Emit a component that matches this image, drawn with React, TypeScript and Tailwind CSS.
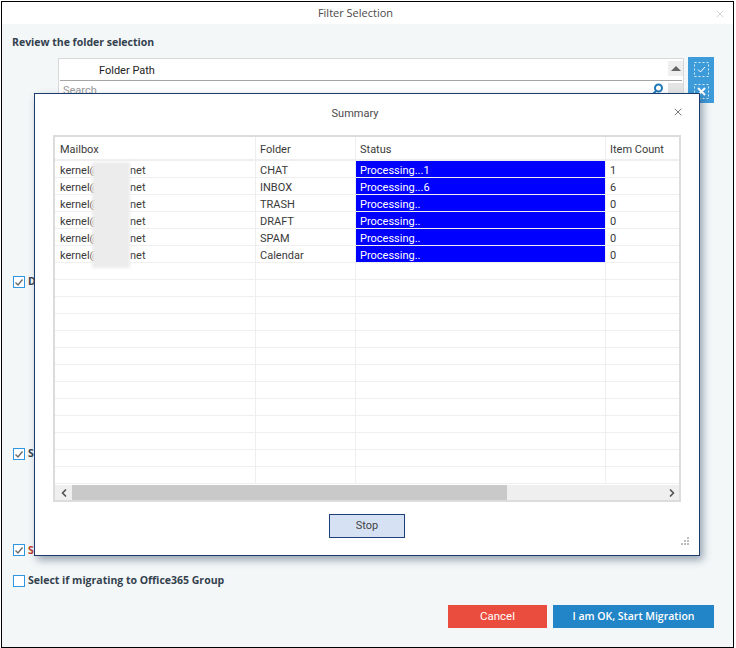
import { ChevronLeft, ChevronRight, X } from "lucide-react";

const rows = [
  { folder: "CHAT", status: "Processing...1", count: "1" },
  { folder: "INBOX", status: "Processing...6", count: "6" },
  { folder: "TRASH", status: "Processing..", count: "0" },
  { folder: "DRAFT", status: "Processing..", count: "0" },
  { folder: "SPAM", status: "Processing..", count: "0" },
  { folder: "Calendar", status: "Processing..", count: "0" },
];

const emptyRows = Array.from({ length: 13 });

function Check({ checked }: { checked: boolean }) {
  return (
    <span className="flex h-3 w-3 shrink-0 items-center justify-center border border-[#2f97e0] bg-white">
      {checked && (
        <svg width="10" height="10" viewBox="0 0 10 10" fill="none" stroke="#6b6b6b" strokeWidth="1.4">
          <path d="M1.5 5.5 L4 8 L8.5 2.5" />
        </svg>
      )}
    </span>
  );
}

function CheckRow({ label, className }: { label: string; className: string }) {
  return (
    <div className={`ml-[11px] flex items-center gap-[3px] text-[10.5px] font-bold text-[#33414e] ${className}`}>
      <Check checked />
      <span>{label}</span>
    </div>
  );
}

function Cell({ className = "", children }: { className?: string; children?: React.ReactNode }) {
  return <div className={`flex items-center border-r border-[#efefef] pt-[4px] ${className}`}>{children}</div>;
}

function Summary() {
  return (
    <div className="absolute left-[34px] top-[93px] flex h-[463px] w-[666px] flex-col border border-[#1d3c6e] bg-white font-['Roboto',sans-serif] shadow-[3px_4px_8px_rgba(40,60,90,0.45)]">
      <div className="relative flex h-[41px] shrink-0 items-center justify-center pb-[1px] pr-[24px] text-[#4a4a4a]">
        Summary
        <X size={12} strokeWidth={1.6} className="absolute right-[15px] top-[12px] text-[#555]" />
      </div>

      <div className="relative mx-[18px] h-[367px] overflow-hidden border-2 border-[#dcdcdc] text-[#3a3a3a]">
        <div className="flex h-[24px] border-b-2 border-[#efefef]">
          <Cell className="w-[201px] pl-[5px]">Mailbox</Cell>
          <Cell className="w-[100px] pl-[4px]">Folder</Cell>
          <Cell className="w-[250px] pl-[4px]">Status</Cell>
          <Cell className="flex-1 border-r-0 pl-[4px]">Item Count</Cell>
        </div>

        {rows.map((row) => (
          <div key={row.folder} className="flex h-[17px] border-b border-[#efefef]">
            <Cell className="w-[201px] pl-[5px]">
              <span className="w-[70px] overflow-hidden whitespace-nowrap">kernel@</span>
              <span>net</span>
            </Cell>
            <Cell className="w-[100px] pl-[4px]">{row.folder}</Cell>
            <Cell className="w-[250px] bg-[#0000ff] pl-[4px] text-white">{row.status}</Cell>
            <Cell className="flex-1 border-r-0 pl-[4px]">{row.count}</Cell>
          </div>
        ))}

        {emptyRows.map((_, i) => (
          <div key={i} className="flex h-[17px] border-b border-[#efefef]">
            <Cell className="w-[201px]" />
            <Cell className="w-[100px]" />
            <Cell className="w-[250px]" />
            <Cell className="flex-1 border-r-0" />
          </div>
        ))}

        {/* blurred address */}
        <div className="absolute left-[37px] top-[25px] h-[106px] w-[38px] bg-[#ececec] blur-[1.5px]" />

        <div className="absolute bottom-0 left-0 right-0 flex h-[15px] bg-[#efefef]">
          <div className="flex w-[17px] items-center justify-center">
            <ChevronLeft size={12} strokeWidth={3.5} className="text-[#555]" />
          </div>
          <div className="w-[435px] bg-[#c9c9c9]" />
          <div className="flex flex-1 items-center justify-end pr-[1px]">
            <ChevronRight size={12} strokeWidth={3.5} className="text-[#555]" />
          </div>
        </div>
      </div>

      <div className="relative flex flex-1 justify-center pt-[12px]">
        <button className="h-[24px] w-[76px] border border-[#1d4078] bg-[#d6e2f3] text-[#444]">Stop</button>
        <svg width="10" height="10" viewBox="0 0 10 10" fill="#bdbdbd" className="absolute bottom-[9px] right-[9px]">
          <rect x="7" y="1" width="2" height="2" />
          <rect x="4" y="4" width="2" height="2" />
          <rect x="7" y="4" width="2" height="2" />
          <rect x="1" y="7" width="2" height="2" />
          <rect x="4" y="7" width="2" height="2" />
          <rect x="7" y="7" width="2" height="2" />
        </svg>
      </div>
    </div>
  );
}

export default function App() {
  return (
    <div className="relative h-[648px] w-[736px] bg-white pl-px pt-px font-['Open_Sans',sans-serif] text-[11px]">
      <div className="flex h-[647px] w-[733px] flex-col border border-black bg-[#f3f7f8]">
        <div className="relative flex h-[22px] shrink-0 items-center justify-center bg-white pr-[24px] text-[#4a4a4a]">
          Filter Selection
          <X size={12} strokeWidth={1.5} className="absolute right-[7px] top-[6px] text-[#c4c4c4]" />
        </div>

        <h2 className="ml-[10px] mt-[10px] text-[10.5px] font-bold leading-[16px] text-[#33414e]">Review the folder selection</h2>

        <div className="ml-[56px] mt-[8px] flex h-[180px] gap-[4px]">
          <div className="relative w-[626px] border border-[#d8d8d8] bg-white">
            <div className="mx-[1px] flex h-[22px] items-center border-b border-[#a6a6a6] pl-[39px] pt-[3px] font-['Roboto',sans-serif] text-[11px] text-[#222]">
              Folder Path
            </div>
            <div className="pl-[4px] pt-[2px] font-['Roboto',sans-serif] text-[#9a9a9a]">Search</div>
            <svg width="13" height="13" viewBox="0 0 13 13" fill="none" stroke="#1f77b8" strokeWidth="2" className="absolute right-[19px] top-[24px]">
              <circle cx="7.5" cy="5" r="3.5" />
              <path d="M5 8 L1 12" />
            </svg>
            <div className="absolute right-0 top-[2px] flex w-[15px] flex-col gap-[7px]">
              <div className="flex h-[15px] items-center justify-center bg-[#efefef]">
                <span className="h-0 w-0 border-x-[5px] border-b-[5px] border-x-transparent border-b-[#666]" />
              </div>
              <div className="h-[40px] bg-[#e4e4e4]" />
            </div>
          </div>
          <div className="-mt-px flex h-[46px] w-[26px] flex-col items-center gap-[7px] bg-[#3d9bd9] pt-[5px]">
            <svg width="15" height="15" viewBox="0 0 15 15" fill="none" stroke="#ffffff">
              <rect x="0.5" y="0.5" width="14" height="14" strokeDasharray="2 2" opacity="0.8" />
              <path d="M4 7.5 L6.5 10 L11 5" />
            </svg>
            <svg width="15" height="15" viewBox="0 0 15 15" fill="none" stroke="#ffffff">
              <rect x="0.5" y="0.5" width="14" height="14" strokeDasharray="2 2" opacity="0.8" />
              <path d="M4 4 L11 11 M11 4 L4 11" strokeWidth="2" />
            </svg>
          </div>
        </div>

        <CheckRow label="D" className="mt-[36px]" />
        <CheckRow label="S" className="mt-[156px]" />
        <div className="ml-[11px] mt-[81px] flex items-center gap-[3px] text-[10.5px] font-bold text-[#c0392b]">
          <Check checked />
          <span>S</span>
        </div>
        <div className="ml-[11px] mt-[15px] flex items-center gap-[3px] text-[10.5px] font-bold text-[#33414e]">
          <Check checked={false} />
          <span>Select if migrating to Office365 Group</span>
        </div>

        <div className="mb-[19px] mr-[19px] mt-auto flex justify-end gap-[6px]">
          <button className="h-[23px] w-[99px] bg-[#ea4d3d] font-['Roboto',sans-serif] text-[11.5px] text-white">Cancel</button>
          <button className="h-[23px] w-[161px] bg-[#2185c8] text-[10.5px] font-semibold text-white">I am OK, Start Migration</button>
        </div>
      </div>
      <Summary />
    </div>
  );
}
